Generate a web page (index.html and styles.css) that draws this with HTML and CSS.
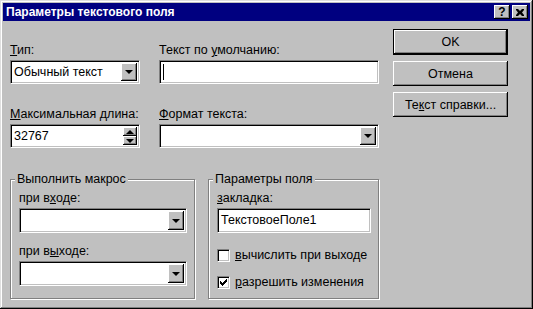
FILE: index.html
```html
<!DOCTYPE HTML>
<html lang="ru">
  <head>
    <title>Параметры текстового поля</title>
    <meta charset="utf-8">
    <link rel="stylesheet" href="styles.css">
  </head>
  <body>

  <div class="window">
    <div class="titlebar">
      <span class="title">Параметры текстового поля</span>
      <div class="title-buttons">
        <span class="tbtn help">?</span>
        <span class="tbtn close">
          <svg width="8" height="7" viewBox="0 0 8 7"><path d="M0 0h2l2 2 2-2h2v1l-2 2.5 2 2.5v1h-2l-2-2-2 2h-2v-1l2-2.5-2-2.5z" fill="#000"/></svg>
        </span>
      </div>
    </div>

    <div class="content">
      <div class="form">

        <div class="fields">
          <div class="field">
            <div class="label"><u>Т</u>ип:</div>
            <div class="edit combo">
              <span class="value">Обычный текст</span>
              <span class="drop"></span>
            </div>
          </div>
          <div class="field">
            <div class="label">Текст по <u>у</u>молчанию:</div>
            <div class="edit">
              <span class="caret"></span>
            </div>
          </div>
          <div class="field">
            <div class="label"><u>М</u>аксимальная длина:</div>
            <div class="edit">
              <span class="value">32767</span>
              <span class="spinner">
                <span class="spin up"></span>
                <span class="spin down"></span>
              </span>
            </div>
          </div>
          <div class="field">
            <div class="label"><u>Ф</u>ормат текста:</div>
            <div class="edit combo">
              <span class="value"></span>
              <span class="drop"></span>
            </div>
          </div>
        </div>

        <div class="groups">
          <div class="group">
            <div class="legend">Выполнить макрос</div>
            <div class="label">при в<u>х</u>оде:</div>
            <div class="edit combo">
              <span class="value"></span>
              <span class="drop"></span>
            </div>
            <div class="label next">при в<u>ы</u>ходе:</div>
            <div class="edit combo">
              <span class="value"></span>
              <span class="drop"></span>
            </div>
          </div>

          <div class="group">
            <div class="legend">Параметры поля</div>
            <div class="label"><u>з</u>акладка:</div>
            <div class="edit">
              <span class="value">ТекстовоеПоле1</span>
            </div>
            <div class="checks">
              <div class="check"><span class="box"></span><span><u>в</u>ычислить при выходе</span></div>
              <div class="check"><span class="box checked">
                <svg width="7" height="7" viewBox="0 0 7 7"><path d="M0 2h1v1h1v1h1v-1h1v-1h1v-1h1v-1h1v3h-1v1h-1v1h-1v1h-1v1h-1v-1h-1v-1h-1v-1h-1z" fill="#000"/></svg>
              </span><span><u>р</u>азрешить изменения</span></div>
            </div>
          </div>
        </div>

      </div>

      <div class="buttons">
        <div class="button default">OK</div>
        <div class="button">Отмена</div>
        <div class="button">Те<u>к</u>ст справки...</div>
      </div>
    </div>
  </div>

  </body>
</html>
```

FILE: styles.css
```css
html, body {
  margin: 0;
  padding: 0;
  background: #c0c0c0;
}

body {
  font-family: "Liberation Sans", Arial, sans-serif;
  font-size: 12.5px;
  line-height: 16px;
  color: #000;
}

u {
  text-decoration: underline;
  text-underline-offset: 1px;
}

.window {
  box-sizing: border-box;
  width: 533px;
  height: 309px;
  padding: 3px;
  background: #c0c0c0;
  box-shadow: inset -1px -1px #000, inset 1px 1px #dfdfdf,
              inset -2px -2px #808080, inset 2px 2px #fff;
}

/* title bar */
.titlebar {
  height: 18px;
  background: #000080;
  color: #fff;
  display: flex;
  align-items: center;
  justify-content: space-between;
  padding: 0 2px 0 3px;
}

.title {
  font-weight: bold;
  font-size: 12px;
}

.title-buttons {
  display: flex;
  gap: 2px;
}

.tbtn {
  box-sizing: border-box;
  width: 16px;
  height: 14px;
  background: #c0c0c0;
  color: #000;
  display: flex;
  align-items: center;
  justify-content: center;
  font-weight: bold;
  font-size: 12px;
  box-shadow: inset -1px -1px #000, inset 1px 1px #fff, inset -2px -2px #808080;
}

/* body */
.content {
  display: flex;
  align-items: flex-start;
  padding: 9px 0 0 7px;
}

.form {
  padding-top: 12px;
  width: 370px;
}

.fields {
  display: grid;
  grid-template-columns: 130px 220px;
  column-gap: 19px;
  row-gap: 22px;
}

.label {
  margin-bottom: 2px;
  white-space: nowrap;
}

.edit {
  box-sizing: border-box;
  height: 24px;
  background: #fff;
  border: 1px solid;
  border-color: #808080 #fff #fff #808080;
  box-shadow: inset 1px 1px #000, inset -1px -1px #c0c0c0;
  padding: 2px;
  display: flex;
  align-items: stretch;
}

.edit .value {
  flex: 1;
  padding-left: 1px;
  line-height: 18px;
  white-space: nowrap;
}

.caret {
  width: 1px;
  background: #000;
  margin: 1px 0 1px 1px;
}

.drop {
  box-sizing: border-box;
  width: 16px;
  background: #c0c0c0;
  box-shadow: inset -1px -1px #000, inset 1px 1px #fff, inset -2px -2px #808080;
  display: flex;
  align-items: center;
  justify-content: center;
}

.drop::after {
  content: "";
  border-left: 4px solid transparent;
  border-right: 4px solid transparent;
  border-top: 4px solid #000;
  margin-left: -1px;
}

.spinner {
  width: 14px;
  display: flex;
  flex-direction: column;
}

.spin {
  flex: 1;
  background: #c0c0c0;
  box-shadow: inset -1px -1px #000, inset 1px 1px #fff, inset -2px -2px #808080;
  display: flex;
  align-items: center;
  justify-content: center;
}

.spin.up::after {
  content: "";
  border-left: 4px solid transparent;
  border-right: 4px solid transparent;
  border-bottom: 4px solid #000;
  margin-left: -1px;
}

.spin.down::after {
  content: "";
  border-left: 4px solid transparent;
  border-right: 4px solid transparent;
  border-top: 4px solid #000;
  margin-left: -1px;
}

/* group boxes */
.groups {
  display: grid;
  grid-template-columns: 185px 171px;
  column-gap: 13px;
  margin-top: 31px;
}

.group {
  position: relative;
  box-sizing: border-box;
  height: 120px;
  border: 1px solid #808080;
  box-shadow: 1px 1px 0 #fff, inset 1px 1px 0 #fff;
  padding: 10px 7px 0 8px;
}

.legend {
  position: absolute;
  top: -9px;
  left: 4px;
  padding: 0 2px;
  background: #c0c0c0;
  white-space: nowrap;
}

.group .label.next {
  margin-top: 10px;
}

.group .edit {
  height: 25px;
}

.checks {
  display: flex;
  flex-direction: column;
  gap: 11px;
  margin-top: 14px;
}

.check {
  display: flex;
  align-items: center;
  gap: 5px;
  white-space: nowrap;
}

.box {
  box-sizing: border-box;
  flex: none;
  width: 13px;
  height: 13px;
  background: #fff;
  border: 1px solid;
  border-color: #808080 #fff #fff #808080;
  box-shadow: inset 1px 1px #000, inset -1px -1px #c0c0c0;
  display: flex;
  align-items: center;
  justify-content: center;
}

.box svg {
  display: block;
}

/* buttons */
.buttons {
  display: flex;
  flex-direction: column;
  gap: 6px;
  margin-left: 13px;
  width: 115px;
}

.button {
  box-sizing: border-box;
  height: 25px;
  display: flex;
  align-items: center;
  justify-content: center;
  background: #c0c0c0;
  box-shadow: inset -1px -1px #000, inset 1px 1px #fff, inset -2px -2px #808080;
}

.button.default {
  border: 1px solid #000;
  height: 26px;
  margin-top: -1px;
}
```
